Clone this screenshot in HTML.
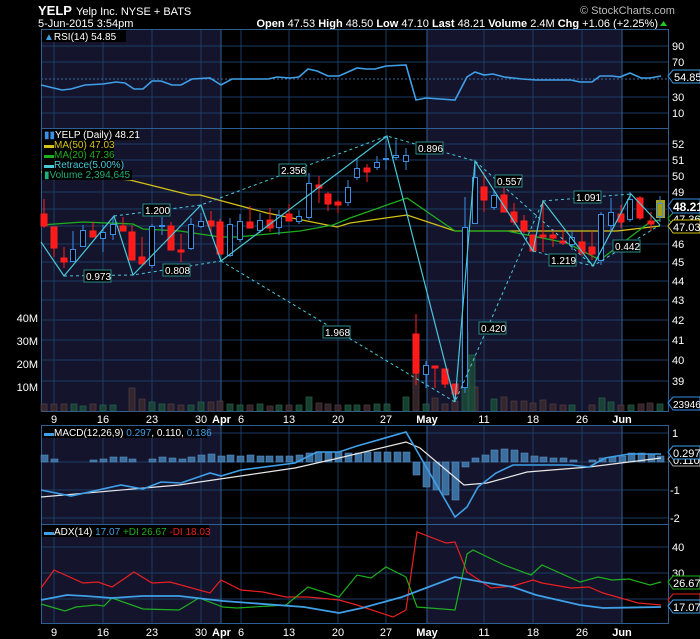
<!DOCTYPE html><html><head><meta charset="utf-8"><style>
html,body{margin:0;padding:0;background:#000;width:700px;height:639px;overflow:hidden}
svg{display:block;font-family:"Liberation Sans",sans-serif}
</style></head><body>
<svg width="700" height="639" viewBox="0 0 700 639" xmlns="http://www.w3.org/2000/svg">
<rect width="700" height="639" fill="#000"/>
<!-- header -->
<text x="38" y="15" fill="#fff" font-size="13" font-weight="bold">YELP</text>
<text x="76" y="15" fill="#fff" font-size="11">Yelp Inc.  NYSE + BATS</text>
<text x="38" y="27" fill="#fff" font-size="11">5-Jun-2015 3:54pm</text>
<text x="580" y="14" fill="#bbb" font-size="11">© StockCharts.com</text>
<text x="658" y="27" fill="#fff" font-size="11" text-anchor="end"><tspan font-weight="bold">Open</tspan> 47.53 <tspan font-weight="bold">High</tspan> 48.50 <tspan font-weight="bold">Low</tspan> 47.10 <tspan font-weight="bold">Last</tspan> 48.21 <tspan font-weight="bold">Volume</tspan> 2.4M <tspan font-weight="bold">Chg</tspan> +1.06 (+2.25%)</text>
<polygon points="660,26 667,26 663.5,21" fill="#1ec81e"/>

<!-- panel backgrounds -->
<g>
<rect x="41" y="29" width="180" height="99" fill="#14142d"/><rect x="427" y="29" width="195" height="99" fill="#14142d"/>
<rect x="41" y="128" width="180" height="283" fill="#14142d"/><rect x="427" y="128" width="195" height="283" fill="#14142d"/>
<rect x="41" y="425" width="180" height="99" fill="#14142d"/><rect x="427" y="425" width="195" height="99" fill="#14142d"/>
<rect x="41" y="524" width="180" height="99" fill="#14142d"/><rect x="427" y="524" width="195" height="99" fill="#14142d"/>
</g>
<!-- grid -->
<g stroke="#1c3d63" stroke-width="1">
<path d="M54 29V411M103 29V411M152 29V411M201 29V411M241 29V411M289 29V411M338 29V411M386 29V411M484 29V411M533 29V411M582 29V411"/>
<path d="M54 425V623M103 425V623M152 425V623M201 425V623M241 425V623M289 425V623M338 425V623M386 425V623M484 425V623M533 425V623M582 425V623"/>
<path d="M41 46H668M41 62H668M41 97H668M41 113H668"/>
<path d="M41 144H668M41 160H668M41 176H668M41 192H668M41 209H668M41 226H668M41 244H668M41 262H668M41 281H668M41 300H668M41 320H668M41 340H668M41 360H668M41 381H668"/>
<path d="M41 433H668M41 462H668M41 490H668M41 518H668M41 547H668M41 573H668M41 599H668"/>
</g>
<g stroke="#2e5f92" stroke-width="1">
<path d="M221 29V411M427 29V411M622 29V411M221 425V623M427 425V623M622 425V623"/>
</g>
<path d="M41 79H668" stroke="#3a6a9a" stroke-dasharray="2,2"/>
<g fill="none" stroke="#2e5f92">
<rect x="41.5" y="29.5" width="627" height="99"/>
<rect x="41.5" y="128.5" width="627" height="283"/>
<rect x="41.5" y="425.5" width="627" height="99"/>
<rect x="41.5" y="524.5" width="627" height="99"/>
</g>

<!-- RSI -->
<rect x="42" y="30" width="84" height="12" fill="#000"/>
<text x="44" y="40" fill="#fff" font-size="10"><tspan fill="#3fa0e8">▲</tspan>RSI(14) 54.85</text>
<polyline fill="none" stroke="#3fa0e8" stroke-width="1.6" points="41,85 62,90 71,89 85,85 103,84 116,82 125,83 134,89 143,89 152,81 161,81 172,85 181,85 192,79 210,78 221,85 232,79 241,79 268,79 277,77 290,78 299,77 308,69 317,71 328,76 339,76 357,68 366,69 375,69 386,66 406,65 416,100 426,98 455,100 467,77 475,72 484,75 493,74 504,77 522,79 536,80 571,80 580,82 592,82 600,76 612,76 620,77 630,73 641,78 650,78 661,76"/>
<g fill="#fff" font-size="11">
<text x="672" y="50">90</text><text x="672" y="66">70</text><text x="672" y="101">30</text><text x="672" y="117">10</text>
</g>
<path d="M668 76l5-6h27v13h-27z" fill="#000" stroke="#3fa0e8"/>
<text x="674" y="81" fill="#fff" font-size="11">54.85</text>

<!-- Volume bars -->
<g fill="#3a2a2e" stroke="#5a4048" stroke-width="0.8" opacity="0.85">
<rect x="41" y="404" width="6" height="7"/><rect x="51" y="404" width="6" height="7"/><rect x="61" y="404" width="6" height="7"/><rect x="90" y="404" width="6" height="7"/><rect x="129" y="388" width="6" height="23"/><rect x="139" y="399" width="6" height="12"/><rect x="168" y="404" width="6" height="7"/><rect x="178" y="405" width="6" height="6"/><rect x="208" y="402" width="6" height="9"/><rect x="217" y="401" width="6" height="10"/><rect x="247" y="405" width="6" height="6"/><rect x="267" y="406" width="6" height="5"/><rect x="286" y="405" width="6" height="6"/><rect x="316" y="403" width="6" height="8"/><rect x="325" y="404" width="6" height="7"/><rect x="335" y="405" width="6" height="6"/><rect x="364" y="405" width="6" height="6"/><rect x="413" y="373" width="6" height="38"/><rect x="432" y="398" width="6" height="13"/><rect x="442" y="404" width="6" height="7"/><rect x="452" y="401" width="6" height="10"/><rect x="472" y="387" width="6" height="24"/><rect x="501" y="397" width="6" height="14"/><rect x="511" y="401" width="6" height="10"/><rect x="521" y="401" width="6" height="10"/><rect x="530" y="403" width="6" height="8"/><rect x="540" y="400" width="6" height="11"/><rect x="550" y="404" width="6" height="7"/><rect x="560" y="405" width="6" height="6"/><rect x="589" y="405" width="6" height="6"/><rect x="618" y="405" width="6" height="6"/><rect x="638" y="404" width="6" height="7"/><rect x="647" y="403" width="6" height="8"/>
</g>
<g fill="#1a4a38" stroke="#2a6a50" stroke-width="0.8" opacity="0.85">
<rect x="71" y="404" width="6" height="7"/><rect x="80" y="406" width="6" height="5"/><rect x="100" y="405" width="6" height="6"/><rect x="110" y="405" width="6" height="6"/><rect x="149" y="402" width="6" height="9"/><rect x="159" y="404" width="6" height="7"/><rect x="188" y="405" width="6" height="6"/><rect x="198" y="402" width="6" height="9"/><rect x="227" y="404" width="6" height="7"/><rect x="237" y="405" width="6" height="6"/><rect x="257" y="404" width="6" height="7"/><rect x="276" y="405" width="6" height="6"/><rect x="296" y="405" width="6" height="6"/><rect x="306" y="397" width="6" height="14"/><rect x="345" y="405" width="6" height="6"/><rect x="354" y="405" width="6" height="6"/><rect x="374" y="404" width="6" height="7"/><rect x="384" y="404" width="6" height="7"/><rect x="403" y="397" width="6" height="14"/><rect x="423" y="404" width="6" height="7"/><rect x="462" y="332" width="6" height="79"/><rect x="469" y="355" width="6" height="56"/><rect x="491" y="399" width="6" height="12"/><rect x="569" y="405" width="6" height="6"/><rect x="599" y="398" width="6" height="13"/><rect x="608" y="402" width="6" height="9"/><rect x="628" y="405" width="6" height="6"/><rect x="657" y="404" width="6" height="7"/>
</g>

<!-- MAs -->
<polyline fill="none" stroke="#d4c21a" stroke-width="1.3" points="41,172 90,176 130,180 190,195 200,195 267,213 337,227 350,223 407,215 455,231 617,231 660,226"/>
<polyline fill="none" stroke="#1fae1f" stroke-width="1.3" points="41,225 83,222 133,224 143,229 180,231 220,237 237,237 300,231 333,225 350,218 407,198 455,231 507,231 567,243 600,260 650,222 660,220"/>

<!-- candles -->
<g stroke-width="1">
<g stroke="#ff2020" fill="#ff1a1a">
<line x1="44" y1="199" x2="44" y2="228"/><rect x="41" y="214" width="6" height="12"/>
<line x1="54" y1="227" x2="54" y2="257"/><rect x="51" y="227" width="6" height="21"/>
<line x1="64" y1="247" x2="64" y2="268"/><rect x="61" y="258" width="6" height="4"/>
<line x1="93" y1="222" x2="93" y2="237"/><rect x="90" y="231" width="6" height="6"/>
<line x1="123" y1="217" x2="123" y2="231"/><rect x="120" y="226" width="6" height="5"/>
<line x1="132" y1="225" x2="132" y2="260"/><rect x="129" y="232" width="6" height="28"/>
<line x1="142" y1="237" x2="142" y2="264"/><rect x="139" y="257" width="6" height="7"/>
<line x1="171" y1="222" x2="171" y2="250"/><rect x="168" y="226" width="6" height="24"/>
<line x1="181" y1="234" x2="181" y2="262"/><rect x="178" y="250" width="6" height="2"/>
<line x1="211" y1="211" x2="211" y2="235"/><rect x="208" y="221" width="6" height="5"/>
<line x1="220" y1="219" x2="220" y2="254"/><rect x="217" y="222" width="6" height="32"/>
<line x1="250" y1="206" x2="250" y2="228"/><rect x="247" y="222" width="6" height="6"/>
<line x1="270" y1="208" x2="270" y2="232"/><rect x="267" y="220" width="6" height="8"/>
<line x1="289" y1="204" x2="289" y2="221"/><rect x="286" y="214" width="6" height="7"/>
<line x1="319" y1="176" x2="319" y2="203"/><rect x="316" y="185" width="6" height="3"/>
<line x1="328" y1="192" x2="328" y2="211"/><rect x="325" y="194" width="6" height="10"/>
<line x1="338" y1="200" x2="338" y2="213"/><rect x="335" y="202" width="6" height="3"/>
<line x1="367" y1="164" x2="367" y2="182"/><rect x="364" y="168" width="6" height="4"/>
<line x1="416" y1="314" x2="416" y2="385"/><rect x="413" y="334" width="6" height="39"/>
<line x1="435" y1="366" x2="435" y2="388"/><rect x="432" y="366" width="6" height="2"/>
<line x1="445" y1="369" x2="445" y2="388"/><rect x="442" y="369" width="6" height="15"/>
<line x1="455" y1="384" x2="455" y2="402"/><rect x="452" y="384" width="6" height="10"/>
<line x1="484" y1="172" x2="484" y2="212"/><rect x="481" y="187" width="6" height="13"/>
<line x1="504" y1="187" x2="504" y2="212"/><rect x="501" y="195" width="6" height="17"/>
<line x1="514" y1="203" x2="514" y2="225"/><rect x="511" y="212" width="6" height="10"/>
<line x1="524" y1="215" x2="524" y2="233"/><rect x="521" y="221" width="6" height="10"/>
<line x1="533" y1="235" x2="533" y2="251"/><rect x="530" y="235" width="6" height="16"/>
<line x1="543" y1="200" x2="543" y2="252"/><rect x="540" y="235" width="6" height="2"/>
<line x1="553" y1="229" x2="553" y2="247"/><rect x="550" y="235" width="6" height="3"/>
<line x1="563" y1="230" x2="563" y2="245"/><rect x="560" y="241" width="6" height="2"/>
<line x1="582" y1="232" x2="582" y2="256"/><rect x="579" y="242" width="6" height="11"/>
<line x1="592" y1="231" x2="592" y2="260"/><rect x="589" y="247" width="6" height="7"/>
<line x1="640" y1="196" x2="640" y2="220"/><rect x="637" y="198" width="6" height="20"/>
<line x1="651" y1="212" x2="651" y2="231"/><rect x="648" y="221" width="6" height="3"/>
</g>
<g stroke="#3a8ee6" fill="#000">
<line x1="73" y1="231" x2="73" y2="262"/><rect x="70.5" y="249.5" width="5" height="12"/>
<line x1="83" y1="225" x2="83" y2="247"/><rect x="80.5" y="230.5" width="5" height="16"/>
<line x1="103" y1="225" x2="103" y2="252"/><rect x="100.5" y="232.5" width="5" height="6"/>
<line x1="113" y1="217" x2="113" y2="240"/><rect x="110.5" y="224.5" width="5" height="10"/>
<line x1="152" y1="224" x2="152" y2="268"/><rect x="149.5" y="226.5" width="5" height="39"/>
<line x1="162" y1="217" x2="162" y2="235"/><rect x="159.5" y="225.5" width="5" height="1"/>
<line x1="191" y1="218" x2="191" y2="250"/><rect x="188.5" y="224.5" width="5" height="24"/>
<line x1="201" y1="213" x2="201" y2="228"/><rect x="198.5" y="221.5" width="5" height="5"/>
<line x1="230" y1="218" x2="230" y2="257"/><rect x="227.5" y="224.5" width="5" height="31"/>
<line x1="240" y1="214" x2="240" y2="242"/><rect x="237.5" y="221.5" width="5" height="18"/>
<line x1="260" y1="213" x2="260" y2="233"/><rect x="257.5" y="220.5" width="5" height="10"/>
<line x1="279" y1="210" x2="279" y2="235"/><rect x="276.5" y="215.5" width="5" height="12"/>
<line x1="299" y1="210" x2="299" y2="224"/><rect x="296.5" y="216.5" width="5" height="5"/>
<line x1="309" y1="173" x2="309" y2="220"/><rect x="306.5" y="183.5" width="5" height="34"/>
<line x1="348" y1="180" x2="348" y2="206"/><rect x="345.5" y="187.5" width="5" height="15"/>
<line x1="357" y1="158" x2="357" y2="180"/><rect x="354.5" y="168.5" width="5" height="9"/>
<line x1="377" y1="156" x2="377" y2="170"/><rect x="374.5" y="162.5" width="5" height="5"/>
<line x1="386" y1="136" x2="386" y2="170"/><rect x="383.5" y="158.5" width="5" height="1"/>
<line x1="396" y1="140" x2="396" y2="160"/><rect x="393.5" y="155.5" width="5" height="2"/>
<line x1="406" y1="148" x2="406" y2="170"/><rect x="403.5" y="155.5" width="5" height="6"/>
<line x1="426" y1="361" x2="426" y2="388"/><rect x="423.5" y="365.5" width="5" height="9"/>
<line x1="465" y1="197" x2="465" y2="393"/><rect x="462.5" y="227.5" width="5" height="160"/>
<line x1="475" y1="161" x2="475" y2="224"/><rect x="472.5" y="177.5" width="5" height="46"/>
<line x1="494" y1="190" x2="494" y2="210"/><rect x="491.5" y="195.5" width="5" height="12"/>
<line x1="572" y1="230" x2="572" y2="250"/><rect x="569.5" y="237.5" width="5" height="7"/>
<line x1="601" y1="212" x2="601" y2="265"/><rect x="598.5" y="214.5" width="5" height="46"/>
<line x1="611" y1="198" x2="611" y2="230"/><rect x="608.5" y="212.5" width="5" height="13"/>
<line x1="630" y1="192" x2="630" y2="222"/><rect x="627.5" y="199.5" width="5" height="20"/>
</g>
<g stroke="#ff2020" fill="#ff1a1a"><line x1="621" y1="205" x2="621" y2="228"/><rect x="618" y="214" width="6" height="8"/></g>
<rect x="656" y="200" width="9" height="18" fill="#a8a010"/>
<g stroke="#3a8ee6" fill="#a8a010"><line x1="660" y1="196" x2="660" y2="222"/><rect x="657.5" y="203.5" width="5" height="13"/></g>
</g>

<!-- retrace zigzag -->
<polyline fill="none" stroke="#4ac8d8" stroke-width="1.2" points="41,242 64,276 114,216 133,275 201,205 221,261 387,136 455,402 475,161 533,251 543,201 593,266 631,194 660,225"/>
<g fill="none" stroke="#4ac8d8" stroke-width="1" stroke-dasharray="3,3">
<path d="M64 276L133 275L221 261M114 216L201 205L387 136L475 161L593 266L660 225M221 261L455 402L543 201M533 251L593 266M543 201L631 194"/>
</g>
<g font-size="10" fill="#fff">
<g fill="#000" stroke="#2c8a8a"><rect x="84" y="270" width="27" height="12"/><rect x="163" y="264" width="27" height="12"/><rect x="143" y="204" width="27" height="12"/><rect x="279" y="164" width="27" height="12"/><rect x="416" y="142" width="27" height="12"/><rect x="323" y="326" width="27" height="12"/><rect x="479" y="322" width="27" height="12"/><rect x="495" y="175" width="27" height="12"/><rect x="549" y="254" width="27" height="12"/><rect x="574" y="191" width="27" height="12"/><rect x="613" y="240" width="27" height="12"/></g>
<text x="86" y="280">0.973</text><text x="165" y="274">0.808</text><text x="145" y="214">1.200</text><text x="281" y="174">2.356</text><text x="418" y="152">0.896</text><text x="325" y="336">1.968</text><text x="481" y="332">0.420</text><text x="497" y="185">0.557</text><text x="551" y="264">1.219</text><text x="576" y="201">1.091</text><text x="615" y="250">0.442</text>
</g>

<!-- price legend -->
<rect x="42" y="129" width="94" height="11" fill="#000"/>
<rect x="42" y="140" width="72" height="10" fill="#000"/>
<rect x="42" y="150" width="72" height="10" fill="#000"/>
<rect x="42" y="160" width="80" height="10" fill="#000"/>
<rect x="42" y="170" width="90" height="10" fill="#000"/>
<g font-size="10">
<text x="44" y="138" fill="#fff"><tspan fill="#3a8ee6">▮▮</tspan>YELP (Daily) 48.21</text>
<text x="44" y="148" fill="#d4c21a">▬MA(50) 47.03</text>
<text x="44" y="158" fill="#1fae1f">▬MA(20) 47.36</text>
<text x="44" y="168" fill="#4ac8d8">▬Retrace(5.00%)</text>
<text x="44" y="178" fill="#1fae7f">▮Volume 2,394,645</text>
</g>
<!-- price axis -->
<g fill="#fff" font-size="11">
<text x="672" y="148">52</text><text x="672" y="164">51</text><text x="672" y="180">50</text><text x="672" y="196">49</text><text x="672" y="248">46</text><text x="672" y="266">45</text><text x="672" y="285">44</text><text x="672" y="304">43</text><text x="672" y="324">42</text><text x="672" y="344">41</text><text x="672" y="364">40</text><text x="672" y="385">39</text>
<text x="38" y="322" text-anchor="end">40M</text><text x="38" y="345" text-anchor="end">30M</text><text x="38" y="368" text-anchor="end">20M</text><text x="38" y="391" text-anchor="end">10M</text>
</g>
<path d="M668 218l5-5h27v13h-27z" fill="#000" stroke="#1fae1f"/>
<text x="673" y="223" fill="#fff" font-size="11">47.36</text>
<path d="M668 226l5-6h27v13h-27z" fill="#000" stroke="#d4c21a"/>
<text x="673" y="231" fill="#fff" font-size="11">47.03</text>
<path d="M668 206l5-7h27v14h-27z" fill="#000" stroke="#3a8ee6"/>
<text x="673" y="211" fill="#fff" font-size="12" font-weight="bold">48.21</text>
<path d="M668 403l5-6h27v13h-27z" fill="#000" stroke="#3a8ee6"/>
<text x="673" y="408" fill="#fff" font-size="10">23946</text>

<!-- date axis -->
<g fill="#fff" font-size="11" text-anchor="middle">
<text x="54" y="423">9</text><text x="103" y="423">16</text><text x="152" y="423">23</text><text x="201" y="423">30</text><text x="212" y="423" font-weight="bold" text-anchor="start">Apr</text><text x="241" y="423">6</text><text x="289" y="423">13</text><text x="338" y="423">20</text><text x="386" y="423">27</text><text x="427" y="423" font-weight="bold">May</text><text x="484" y="423">11</text><text x="533" y="423">18</text><text x="582" y="423">26</text><text x="622" y="423" font-weight="bold">Jun</text>
<text x="54" y="636">9</text><text x="103" y="636">16</text><text x="152" y="636">23</text><text x="201" y="636">30</text><text x="212" y="636" font-weight="bold" text-anchor="start">Apr</text><text x="241" y="636">6</text><text x="289" y="636">13</text><text x="338" y="636">20</text><text x="386" y="636">27</text><text x="427" y="636" font-weight="bold">May</text><text x="484" y="636">11</text><text x="533" y="636">18</text><text x="582" y="636">26</text><text x="622" y="636" font-weight="bold">Jun</text>
</g>

<!-- MACD -->
<g fill="#3a6e9e" stroke="#5a8ebe" stroke-width="0.6">
<rect x="41" y="455" width="7" height="7"/><rect x="51" y="459" width="7" height="3"/><rect x="90" y="460" width="7" height="2"/><rect x="100" y="459" width="7" height="3"/><rect x="110" y="457" width="7" height="5"/><rect x="120" y="457" width="7" height="5"/><rect x="129" y="459" width="7" height="3"/><rect x="149" y="459" width="7" height="3"/><rect x="159" y="457" width="7" height="5"/><rect x="169" y="458" width="7" height="4"/><rect x="179" y="459" width="7" height="3"/><rect x="188" y="457" width="7" height="5"/><rect x="198" y="455" width="7" height="7"/><rect x="208" y="454" width="7" height="8"/><rect x="218" y="456" width="7" height="6"/><rect x="227" y="455" width="7" height="7"/><rect x="237" y="456" width="7" height="6"/><rect x="247" y="455" width="7" height="7"/><rect x="257" y="456" width="7" height="6"/><rect x="266" y="456" width="7" height="6"/><rect x="276" y="456" width="7" height="6"/><rect x="286" y="456" width="7" height="6"/><rect x="296" y="455" width="7" height="7"/><rect x="306" y="453" width="7" height="9"/><rect x="315" y="452" width="7" height="10"/><rect x="325" y="452" width="7" height="10"/><rect x="335" y="452" width="7" height="10"/><rect x="345" y="453" width="7" height="9"/><rect x="355" y="453" width="7" height="9"/><rect x="364" y="452" width="7" height="10"/><rect x="374" y="452" width="7" height="10"/><rect x="384" y="452" width="7" height="10"/><rect x="394" y="452" width="7" height="10"/><rect x="403" y="452" width="7" height="10"/>
<rect x="413" y="462" width="7" height="13"/><rect x="423" y="462" width="7" height="25"/><rect x="433" y="462" width="7" height="28"/><rect x="442" y="462" width="7" height="33"/><rect x="452" y="462" width="7" height="38"/><rect x="462" y="462" width="7" height="5"/>
<rect x="472" y="458" width="7" height="4"/><rect x="482" y="455" width="7" height="7"/><rect x="491" y="450" width="7" height="12"/><rect x="501" y="449" width="7" height="13"/><rect x="511" y="450" width="7" height="12"/><rect x="521" y="453" width="7" height="9"/><rect x="531" y="456" width="7" height="6"/><rect x="540" y="457" width="7" height="5"/><rect x="550" y="458" width="7" height="4"/><rect x="560" y="458" width="7" height="4"/><rect x="570" y="460" width="7" height="2"/><rect x="589" y="460" width="7" height="2"/><rect x="599" y="458" width="7" height="4"/><rect x="609" y="457" width="7" height="5"/><rect x="619" y="456" width="7" height="6"/><rect x="628" y="453" width="7" height="9"/><rect x="638" y="453" width="7" height="9"/><rect x="648" y="455" width="7" height="7"/><rect x="657" y="456" width="7" height="6"/>
</g>
<polyline fill="none" stroke="#e8e8e8" stroke-width="1.2" points="41,497 179,485 295,468 339,458 406,442 420,448 464,485 487,483 527,472 589,467 661,458"/>
<polyline fill="none" stroke="#3fa0e8" stroke-width="1.6" points="41,490 71,496 121,485 143,489 161,482 181,483 210,473 221,476 241,470 295,463 317,452 339,452 357,446 406,432 455,517 467,507 478,487 496,473 513,465 571,465 589,467 605,458 629,454 661,454"/>
<rect x="42" y="426" width="165" height="12" fill="#000"/>
<text x="44" y="436" font-size="10" fill="#fff"><tspan fill="#3fa0e8">▬</tspan>MACD(12,26,9) <tspan fill="#3fa0e8">0.297</tspan>, 0.110, <tspan fill="#3fa0e8">0.186</tspan></text>
<g fill="#fff" font-size="11"><text x="672" y="437">1</text><text x="670" y="494">-1</text><text x="670" y="522">-2</text></g>
<path d="M668 459l5-6h27v13h-27z" fill="#000" stroke="#aaa"/>
<text x="673" y="464" fill="#fff" font-size="11">0.110</text>
<path d="M668 452l5-6h27v13h-27z" fill="#000" stroke="#3fa0e8"/>
<text x="673" y="457" fill="#fff" font-size="11">0.297</text>

<!-- ADX -->
<polyline fill="none" stroke="#e82020" stroke-width="1.2" points="41,588 54,570 83,583 98,582 112,587 134,572 152,583 170,582 210,593 221,580 241,590 263,592 286,597 308,597 339,600 357,605 393,617 406,610 417,532 446,543 455,542 467,572 491,588 513,586 533,580 542,583 571,588 589,587 603,593 638,603 661,605"/>
<polyline fill="none" stroke="#1fae1f" stroke-width="1.2" points="41,604 65,611 76,607 96,605 104,606 112,598 143,609 179,610 199,598 223,607 237,608 286,605 308,587 339,597 357,575 371,578 386,567 406,577 417,607 455,610 467,554 473,550 504,565 531,575 542,565 580,582 598,577 612,580 629,579 650,585 661,582"/>
<polyline fill="none" stroke="#3fa0e8" stroke-width="1.8" points="41,600 67,595 85,596 112,598 143,596 179,596 223,601 250,603 304,607 339,613 362,608 402,597 455,577 482,582 513,587 536,595 580,605 603,608 661,607"/>
<rect x="42" y="525" width="167" height="12" fill="#000"/>
<text x="44" y="535" font-size="10" fill="#fff"><tspan fill="#3fa0e8">▬</tspan>ADX(14) <tspan fill="#3fa0e8">17.07</tspan> <tspan fill="#1fae1f">+DI 26.67</tspan> <tspan fill="#e82020">-DI 18.03</tspan></text>
<g fill="#fff" font-size="11"><text x="672" y="551">40</text><text x="672" y="577">30</text></g>
<path d="M668 600l5-6h27v13h-27z" fill="#000" stroke="#e82020"/>
<path d="M668 582l5-6h27v13h-27z" fill="#000" stroke="#1fae1f"/>
<text x="673" y="587" fill="#fff" font-size="11">26.67</text>
<path d="M668 606l5-6h27v13h-27z" fill="#000" stroke="#3fa0e8"/>
<text x="673" y="611" fill="#fff" font-size="11">17.07</text>
</svg>
</body></html>
